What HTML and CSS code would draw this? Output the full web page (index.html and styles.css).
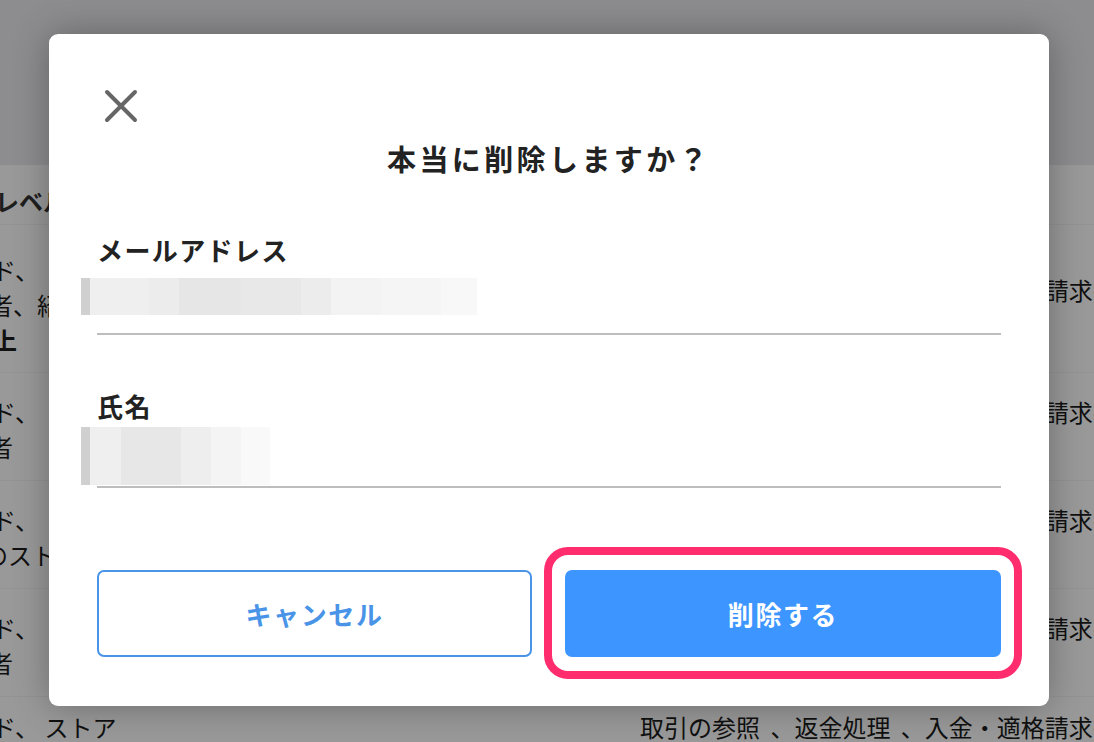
FILE: index.html
```html
<!DOCTYPE html>
<html lang="ja">
<head>
<meta charset="utf-8">
<title>削除確認</title>
<link rel="stylesheet" href="styles.css">
</head>
<body>
<div class="page">
  <header class="page-head"></header>
  <div class="table">
    <div class="row row-title">
      <div class="cell-left"><span class="heading">レベル</span></div>
      <div class="cell-right"></div>
    </div>
    <div class="row row-1">
      <div class="cell-left">
        <p>コード、</p>
        <p class="shift">者、紹介</p>
        <p class="bold shift2">以上</p>
      </div>
      <div class="cell-right"><p>取引の参照 、返金処理 、入金・適格請求書</p></div>
    </div>
    <div class="row row-2">
      <div class="cell-left">
        <p>コード、</p>
        <p class="shift">者</p>
      </div>
      <div class="cell-right"><p>取引の参照 、返金処理 、入金・適格請求書</p></div>
    </div>
    <div class="row row-2">
      <div class="cell-left">
        <p>コード、</p>
        <p class="shift3">品のストア</p>
      </div>
      <div class="cell-right"><p>取引の参照 、返金処理 、入金・適格請求書</p></div>
    </div>
    <div class="row row-2">
      <div class="cell-left">
        <p>コード、</p>
        <p class="shift">者</p>
      </div>
      <div class="cell-right"><p>取引の参照 、返金処理 、入金・適格請求書</p></div>
    </div>
    <div class="row row-last">
      <div class="cell-left"><p>コード、 ストア</p></div>
      <div class="cell-right"><p>取引の参照 、返金処理 、入金・適格請求書</p></div>
    </div>
  </div>
</div>

<div class="overlay">
  <div class="modal">
    <button class="close" aria-label="閉じる">
      <svg width="34" height="34" viewBox="0 0 34 34"><path d="M3 3 L31 31 M31 3 L3 31" stroke="#666" stroke-width="4" stroke-linecap="round" fill="none"/></svg>
    </button>
    <h1 class="title">本当に削除しますか？</h1>
    <div class="field">
      <div class="label">メールアドレス</div>
      <div class="value value-email"><div class="blur blur-email"></div></div>
    </div>
    <div class="field field-name">
      <div class="label">氏名</div>
      <div class="value value-name"><div class="blur blur-name"></div></div>
    </div>
    <div class="actions">
      <button class="btn btn-cancel">キャンセル</button>
      <div class="highlight">
        <button class="btn btn-delete">削除する</button>
      </div>
    </div>
  </div>
</div>
</body>
</html>
```

FILE: styles.css
```css
* { box-sizing: border-box; }
html, body { margin: 0; padding: 0; }
body {
  width: 1094px;
  height: 742px;
  overflow: hidden;
  position: relative;
  background: #ffffff;
  font-family: "Noto Sans CJK JP", "Noto Sans", sans-serif;
  color: #1c1c1c;
}
p { margin: 0; }

.page-head {
  height: 165px;
  background: #ececee;
}
.table { display: flex; flex-direction: column; }
.row {
  display: flex;
  border-bottom: 1px solid #f6f6f6;
}
.cell-left {
  flex: 0 0 600px;
  margin-left: -56px;
  font-size: 24px;
  line-height: 35px;
}
.cell-right {
  flex: 1;
  font-size: 24px;
  line-height: 35px;
  display: flex;
  align-items: flex-start;
  white-space: nowrap;
  padding-left: 96px;
  word-spacing: 5px;
}
.row-title { height: 60px; padding-top: 18px; }
.heading {
  font-weight: 700;
  font-size: 24px;
  margin-left: 51px;
  display: inline-block;
  color: #333;
}
.row-1 { height: 148px; padding-top: 27px; }
.row-1 .cell-right { padding-top: 20px; }
.row-2 { height: 108px; padding-top: 21px; }
.row-last { padding-top: 12px; }
.cell-left p { white-space: nowrap; }
.shift { margin-left: 45px; }
.shift2 { margin-left: 25px; }
.shift3 { margin-left: 16px; }
.bold { font-weight: 700; }

.overlay {
  position: absolute;
  inset: 0;
  background: rgba(0, 0, 0, 0.4);
  padding: 34px 0 0 49px;
}
.modal {
  width: 1000px;
  height: 672px;
  background: #fff;
  border-radius: 9px;
  box-shadow: 0 0 36px rgba(0, 0, 0, 0.3);
  padding: 55px 48px 49px;
  display: flex;
  flex-direction: column;
}
.close {
  width: 34px;
  height: 34px;
  padding: 0;
  margin: 0 0 0 7px;
  border: 0;
  background: none;
  display: block;
}
.close svg { display: block; }
.title {
  margin: 15px 0 0;
  text-align: center;
  font-size: 29px;
  line-height: 40px;
  font-weight: 700;
  letter-spacing: 3.4px;
  color: #222;
}
.field { margin-top: 54px; }
.field-name { margin-top: 53px; }
.label {
  font-size: 26px;
  line-height: 36px;
  font-weight: 700;
  color: #222;
  letter-spacing: 1.4px;
}
.value {
  border-bottom: 2px solid #bdbdbd;
}
.value-email { height: 67px; padding-top: 10px; }
.value-name { height: 64px; padding-top: 3px; }
.blur { margin-left: -16px; }
.blur-email {
  width: 396px;
  height: 37px;
  background:
    linear-gradient(90deg,
      #d0d0d0 0 9px,
      #efefef 9px 68px,
      #ececec 68px 98px,
      #e6e6e6 98px 160px,
      #e8e8e8 160px 220px,
      #ececec 220px 250px,
      #f3f3f3 250px 300px,
      #f5f5f5 300px 360px,
      #f8f8f8 360px 396px);
}
.blur-name {
  width: 189px;
  height: 58px;
  background:
    linear-gradient(90deg,
      #d0d0d0 0 9px,
      #efefef 9px 40px,
      #e7e7e7 40px 100px,
      #eeeeee 100px 130px,
      #f4f4f4 130px 160px,
      #f9f9f9 160px 189px);
}

.actions {
  margin-top: auto;
  display: grid;
  grid-template-columns: 435px 436px;
  column-gap: 33px;
}
.btn {
  height: 87px;
  border-radius: 7px;
  font-family: "Noto Sans CJK JP", "Noto Sans", sans-serif;
  font-size: 26px;
  font-weight: 700;
  letter-spacing: 1.6px;
  cursor: pointer;
}
.btn-cancel {
  background: #fff;
  border: 2px solid #4a94e8;
  color: #4a94e8;
}
.highlight { position: relative; }
.highlight::after {
  content: "";
  position: absolute;
  left: -21px;
  right: -21px;
  top: -23px;
  bottom: -22px;
  border: 8px solid #ff2d6e;
  border-radius: 24px;
  pointer-events: none;
}
.btn-delete {
  width: 100%;
  background: #3d95ff;
  border: 0;
  color: #fff;
}
```
